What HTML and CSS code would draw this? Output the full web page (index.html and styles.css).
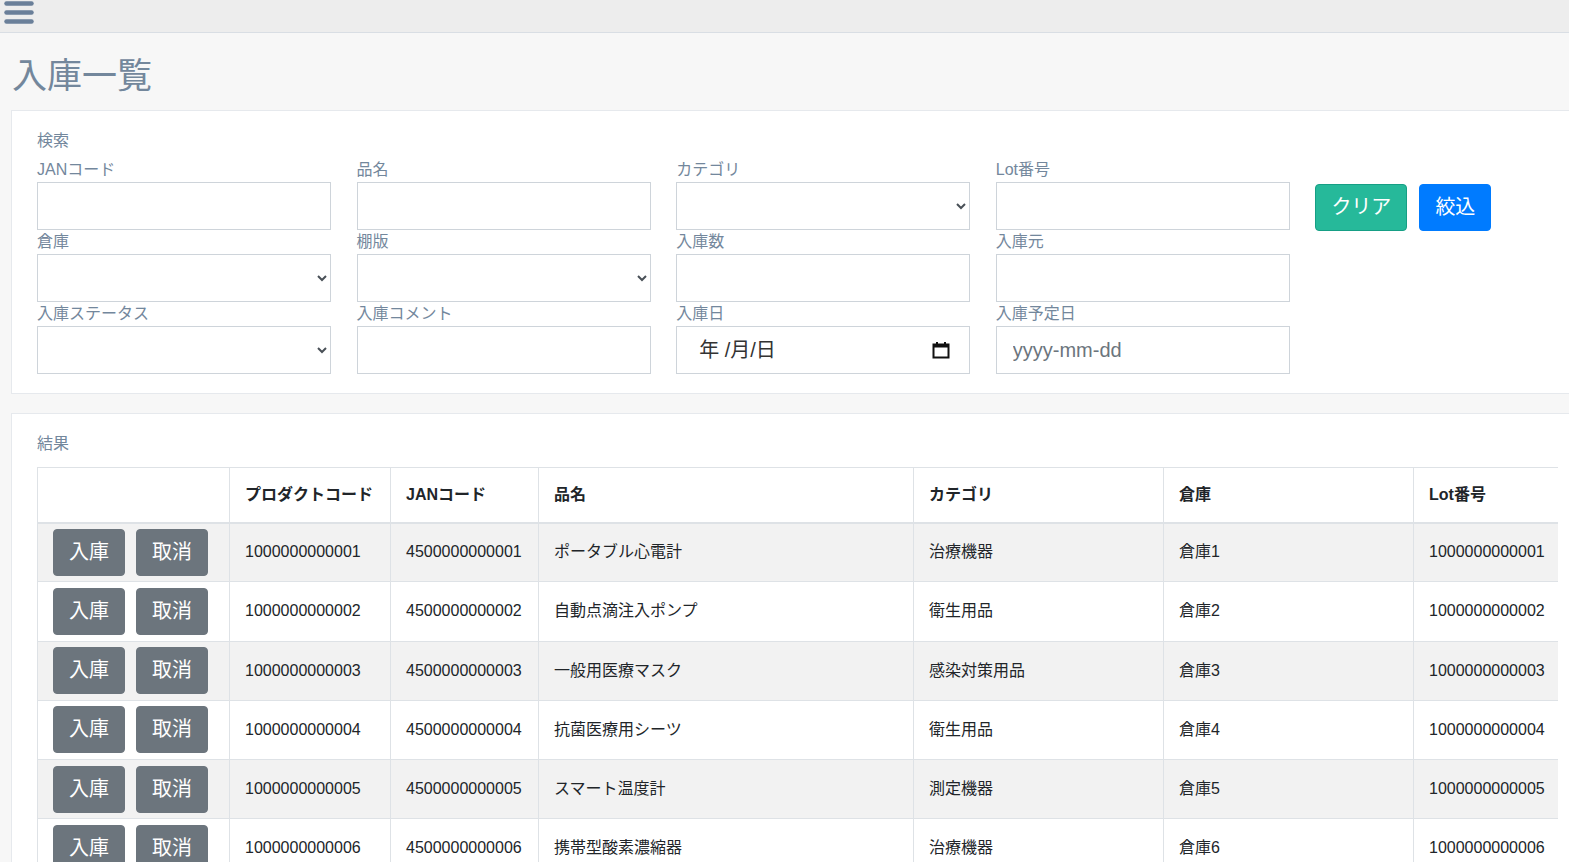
FILE: index.html
```html
<!DOCTYPE html>
<html lang="ja">
<head>
<meta charset="utf-8">
<title>入庫一覧</title>
<link rel="stylesheet" href="styles.css">
</head>
<body>
<header class="topbar">
  <button class="menu-toggle" type="button" aria-label="menu">
    <svg width="30" height="26" viewBox="0 0 30 26"><g stroke="#6a7f99" stroke-width="4.5" stroke-linecap="round"><line x1="2.5" y1="3.5" x2="27.5" y2="3.5"/><line x1="2.5" y1="12.5" x2="27.5" y2="12.5"/><line x1="2.5" y1="21.5" x2="27.5" y2="21.5"/></g></svg>
  </button>
</header>
<main class="page">
  <h1 class="page-title">入庫一覧</h1>

  <section class="panel search-panel">
    <div class="panel-title">検索</div>
    <form class="search-grid">
      <div class="actions">
        <button type="button" class="btn btn-lg btn-success">クリア</button>
        <button type="button" class="btn btn-lg btn-primary">絞込</button>
      </div>
      <div class="field"><label>JANコード</label><input class="form-control" type="text"></div>
      <div class="field"><label>品名</label><input class="form-control" type="text"></div>
      <div class="field"><label>カテゴリ</label><select class="form-control"><option></option></select></div>
      <div class="field"><label>Lot番号</label><input class="form-control" type="text"></div>
      <div class="field"><label>倉庫</label><select class="form-control"><option></option></select></div>
      <div class="field"><label>棚版</label><select class="form-control"><option></option></select></div>
      <div class="field"><label>入庫数</label><input class="form-control" type="text"></div>
      <div class="field"><label>入庫元</label><input class="form-control" type="text"></div>
      <div class="field"><label>入庫ステータス</label><select class="form-control"><option></option></select></div>
      <div class="field"><label>入庫コメント</label><input class="form-control" type="text"></div>
      <div class="field"><label>入庫日</label>
        <div class="form-control date-control">
          <span class="date-text">年 /月/日</span>
          <svg class="cal-icon" width="18" height="18" viewBox="0 0 18 18"><rect x="1.5" y="3.5" width="15" height="13" fill="none" stroke="#111" stroke-width="2"/><rect x="1.5" y="3.5" width="15" height="3" fill="#111"/><rect x="4" y="1" width="2" height="4" fill="#111"/><rect x="12" y="1" width="2" height="4" fill="#111"/></svg>
        </div>
      </div>
      <div class="field"><label>入庫予定日</label><input class="form-control" type="text" placeholder="yyyy-mm-dd"></div>
    </form>
  </section>

  <section class="panel result-panel">
    <div class="panel-title">結果</div>
    <div class="table-wrap">
      <table class="result-table">
        <colgroup>
          <col class="c-act"><col class="c-code"><col class="c-jan"><col class="c-name"><col class="c-cat"><col class="c-wh"><col class="c-lot">
        </colgroup>
        <thead>
          <tr><th></th><th>プロダクトコード</th><th>JANコード</th><th>品名</th><th>カテゴリ</th><th>倉庫</th><th>Lot番号</th></tr>
        </thead>
        <tbody>
          <tr><td class="act"><div class="act-btns"><button class="btn btn-secondary">入庫</button><button class="btn btn-secondary">取消</button></div></td><td>1000000000001</td><td>4500000000001</td><td>ポータブル心電計</td><td>治療機器</td><td>倉庫1</td><td>1000000000001</td></tr>
          <tr><td class="act"><div class="act-btns"><button class="btn btn-secondary">入庫</button><button class="btn btn-secondary">取消</button></div></td><td>1000000000002</td><td>4500000000002</td><td>自動点滴注入ポンプ</td><td>衛生用品</td><td>倉庫2</td><td>1000000000002</td></tr>
          <tr><td class="act"><div class="act-btns"><button class="btn btn-secondary">入庫</button><button class="btn btn-secondary">取消</button></div></td><td>1000000000003</td><td>4500000000003</td><td>一般用医療マスク</td><td>感染対策用品</td><td>倉庫3</td><td>1000000000003</td></tr>
          <tr><td class="act"><div class="act-btns"><button class="btn btn-secondary">入庫</button><button class="btn btn-secondary">取消</button></div></td><td>1000000000004</td><td>4500000000004</td><td>抗菌医療用シーツ</td><td>衛生用品</td><td>倉庫4</td><td>1000000000004</td></tr>
          <tr><td class="act"><div class="act-btns"><button class="btn btn-secondary">入庫</button><button class="btn btn-secondary">取消</button></div></td><td>1000000000005</td><td>4500000000005</td><td>スマート温度計</td><td>測定機器</td><td>倉庫5</td><td>1000000000005</td></tr>
          <tr><td class="act"><div class="act-btns"><button class="btn btn-secondary">入庫</button><button class="btn btn-secondary">取消</button></div></td><td>1000000000006</td><td>4500000000006</td><td>携帯型酸素濃縮器</td><td>治療機器</td><td>倉庫6</td><td>1000000000006</td></tr>
        </tbody>
      </table>
    </div>
  </section>
</main>
</body>
</html>
```
FILE: styles.css
```css
* { box-sizing: border-box; }
html, body { margin: 0; padding: 0; overflow: hidden; }
body {
  background: #f7f7f7;
  font-family: "Liberation Sans", "Noto Sans CJK JP", sans-serif;
  font-size: 16px;
  line-height: 1.5;
  color: #73879c;
  width: 1569px;
  height: 862px;
}

.topbar {
  height: 33px;
  background: #ededed;
  border-bottom: 1px solid #d9dee4;
  display: flex;
  align-items: flex-start;
}
.menu-toggle {
  border: 0;
  background: none;
  padding: 0;
  margin: 0 0 0 4px;
  width: 30px;
  height: 26px;
  display: block;
}
.menu-toggle svg { display: block; }

.page { padding: 0 0 0 11px; }

.page-title {
  margin: 23px 0 15px 1px;
  font-size: 35px;
  font-weight: 400;
  line-height: 39px;
  color: #73879c;
}

.panel {
  background: #fff;
  border: 1px solid #e6e9ed;
  width: 1573px;
  padding: 18px 25px 19px 25px;
}
.panel-title {
  line-height: 24px;
  color: #73879c;
}

.search-panel .panel-title { margin-bottom: 5px; }

.search-grid {
  display: grid;
  grid-template-columns: repeat(5, 294px);
  column-gap: 25.6px;
}
.actions {
  grid-column: 5;
  grid-row: 1 / span 3;
  padding-top: 26px;
  display: flex;
  align-items: flex-start;
  gap: 12px;
}
.field label {
  display: block;
  line-height: 24px;
  height: 24px;
  color: #73879c;
}
.field + .field { }
.form-control {
  display: block;
  width: 100%;
  height: 48px;
  margin: 0;
  padding: 8px 16px;
  font-family: inherit;
  font-size: 20px;
  line-height: 1.5;
  color: #495057;
  background: #fff;
  border: 1px solid #ced4da;
  border-radius: 0;
}
select.form-control { padding: 8px 10px 8px 16px; }
.form-control::placeholder { color: #6c757d; opacity: 1; }

.date-control {
  display: flex;
  align-items: center;
  justify-content: space-between;
  padding: 0 19px 0 22px;
}
.date-text { color: #333; font-size: 20px; }
.cal-icon { display: block; }

.btn {
  display: inline-block;
  font-family: inherit;
  color: #fff;
  border: 1px solid transparent;
  cursor: pointer;
  white-space: nowrap;
}
.btn-lg {
  height: 47px;
  padding: 0 15px;
  font-size: 20px;
  line-height: 45px;
  border-radius: 4px;
}
.btn-success { background: #26b99a; border-color: #169f85; }
.btn-primary { background: #007bff; border-color: #007bff; }
.btn-secondary {
  background: #6c757d;
  border-color: #6c757d;
  height: 47px;
  padding: 0 15px;
  font-size: 20px;
  line-height: 45px;
  border-radius: 4px;
}

.result-panel { margin-top: 19px; padding-bottom: 40px; }
.result-panel .panel-title { margin-bottom: 11px; }

.table-wrap {
  width: 1521px;
  overflow: hidden;
}
.result-table {
  border-collapse: collapse;
  table-layout: fixed;
  width: 1521px;
  color: #212529;
}
.c-act { width: 192px; }
.c-code { width: 161px; }
.c-jan { width: 148px; }
.c-name { width: 375px; }
.c-cat { width: 250px; }
.c-wh { width: 250px; }
.c-lot { width: 145px; }

.result-table th,
.result-table td {
  border: 1px solid #dee2e6;
  text-align: left;
  vertical-align: middle;
  white-space: nowrap;
  padding: 0 15px;
}
.result-table th {
  height: 55px;
  font-weight: 700;
  border-bottom: 2px solid #dee2e6;
}
.result-table td { height: 59.25px; }
.result-table tbody tr:nth-child(odd) { background: #f2f2f2; }
.result-table td.act { padding: 0 15px; }
.act-btns { display: flex; gap: 11px; }
```
